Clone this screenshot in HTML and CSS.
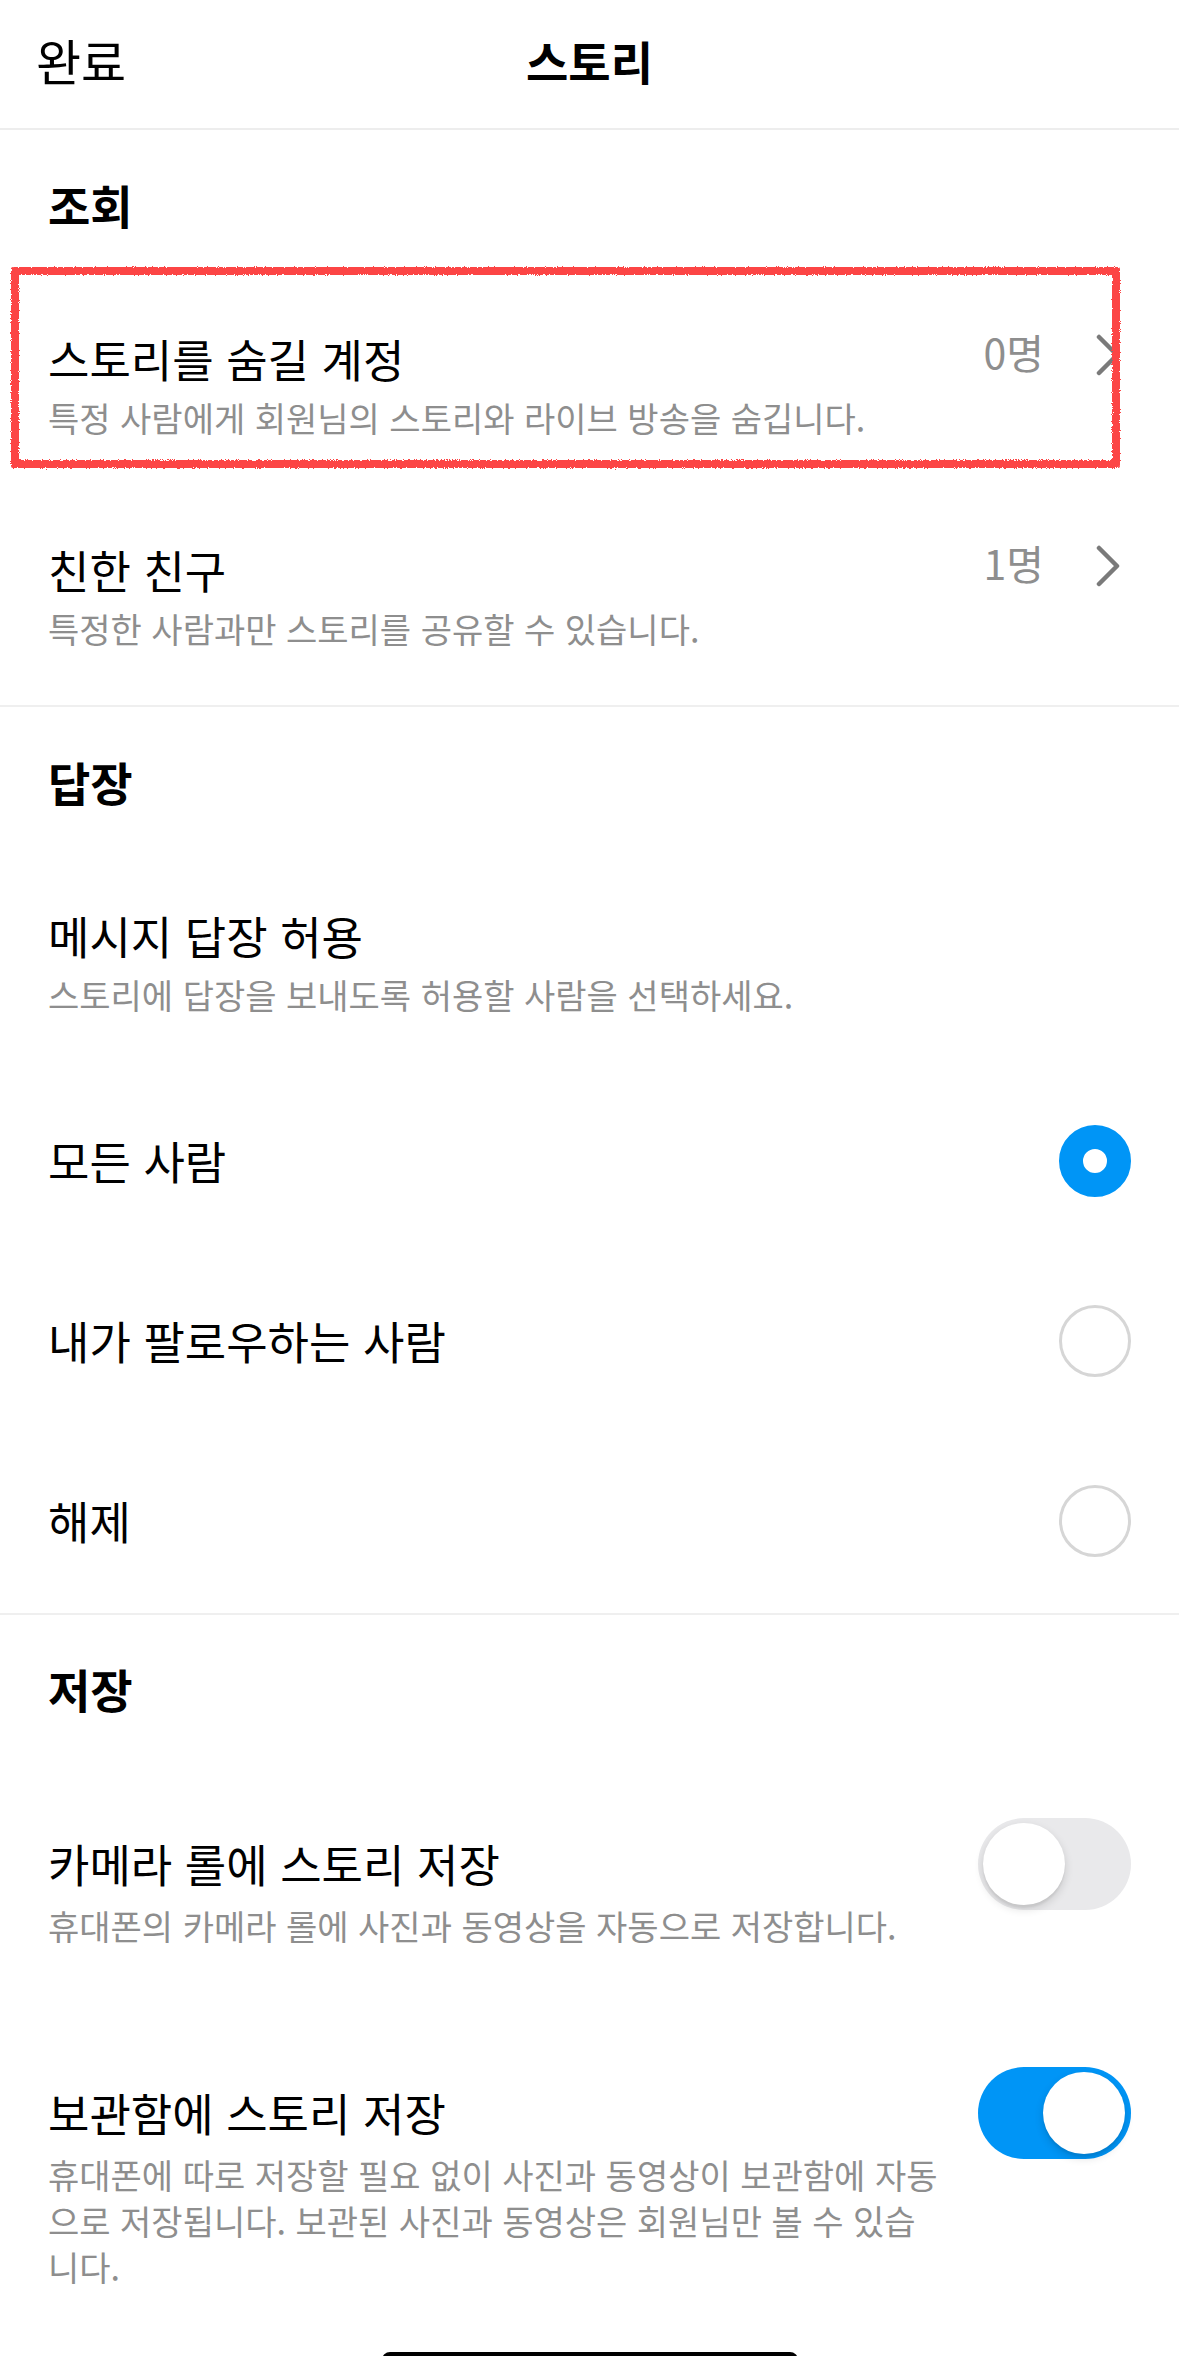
FILE: index.html
```html
<!DOCTYPE html>
<html lang="ko">
<head>
<meta charset="utf-8">
<title>스토리</title>
<link rel="stylesheet" href="styles.css">
</head>
<body>
<svg class="defs" width="0" height="0" aria-hidden="true">
  <filter id="rough" x="-5%" y="-20%" width="110%" height="140%">
    <feTurbulence type="fractalNoise" baseFrequency="0.9" numOctaves="2" seed="3" result="noise"/>
    <feDisplacementMap in="SourceGraphic" in2="noise" scale="4" xChannelSelector="R" yChannelSelector="G"/>
  </filter>
</svg>
<div class="screen">
  <header class="nav">
    <div class="nav-left">완료</div>
    <div class="nav-title">스토리</div>
    <div class="nav-right"></div>
  </header>

  <section class="group">
    <h2 class="group-title">조회</h2>
    <div class="link-row annotated">
      <div class="row-text">
        <div class="row-title">스토리를 숨길 계정</div>
        <div class="row-sub">특정 사람에게 회원님의 스토리와 라이브 방송을 숨깁니다.</div>
      </div>
      <div class="row-value">0명</div>
      <svg class="chev" viewBox="0 0 24 44" width="24" height="44"><polyline points="3,4 21,22 3,40"/></svg>
      <div class="mark"></div>
    </div>
    <div class="link-row">
      <div class="row-text">
        <div class="row-title">친한 친구</div>
        <div class="row-sub">특정한 사람과만 스토리를 공유할 수 있습니다.</div>
      </div>
      <div class="row-value">1명</div>
      <svg class="chev" viewBox="0 0 24 44" width="24" height="44"><polyline points="3,4 21,22 3,40"/></svg>
    </div>
  </section>

  <section class="group">
    <h2 class="group-title">답장</h2>
    <div class="info-row">
      <div class="row-title">메시지 답장 허용</div>
      <div class="row-sub">스토리에 답장을 보내도록 허용할 사람을 선택하세요.</div>
    </div>
    <div class="radio-row">
      <span class="radio-label">모든 사람</span>
      <span class="radio radio-on"></span>
    </div>
    <div class="radio-row">
      <span class="radio-label">내가 팔로우하는 사람</span>
      <span class="radio"></span>
    </div>
    <div class="radio-row">
      <span class="radio-label">해제</span>
      <span class="radio"></span>
    </div>
  </section>

  <section class="group group-last">
    <h2 class="group-title group-title-wide">저장</h2>
    <div class="toggle-row">
      <div class="row-text">
        <div class="row-title">카메라 롤에 스토리 저장</div>
        <div class="row-sub">휴대폰의 카메라 롤에 사진과 동영상을 자동으로 저장합니다.</div>
      </div>
      <span class="toggle"><span class="knob"></span></span>
    </div>
    <div class="toggle-row">
      <div class="row-text">
        <div class="row-title">보관함에 스토리 저장</div>
        <div class="row-sub">휴대폰에 따로 저장할 필요 없이 사진과 동영상이 보관함에 자동으로 저장됩니다. 보관된 사진과 동영상은 회원님만 볼 수 있습니다.</div>
      </div>
      <span class="toggle toggle-on"><span class="knob"></span></span>
    </div>
  </section>

  <div class="home-indicator"></div>
</div>
</body>
</html>
```

FILE: styles.css
```css
* { box-sizing: border-box; }

html, body {
  margin: 0;
  padding: 0;
  background: #ffffff;
}

body {
  width: 1179px;
  height: 2356px;
  overflow: hidden;
  font-family: "Noto Sans CJK KR", "Noto Sans", sans-serif;
  color: #000000;
}

.defs {
  position: absolute;
  width: 0;
  height: 0;
  overflow: hidden;
}

.screen {
  position: relative;
  width: 1179px;
  height: 2356px;
  overflow: hidden;
}

/* Navigation bar */
.nav {
  height: 130px;
  padding: 0 36px 8px 36px;
  border-bottom: 2px solid #ededed;
  display: grid;
  grid-template-columns: 1fr auto 1fr;
  align-items: center;
}

.nav-left {
  font-size: 49px;
  line-height: 60px;
}

.nav-title {
  font-size: 46px;
  line-height: 60px;
  font-weight: 700;
}

/* Groups */
.group {
  padding-bottom: 2px;
  border-bottom: 2px solid #efefef;
}

.group-last {
  border-bottom: none;
}

.group-title {
  margin: 0 0 47px 0;
  padding: 44px 48px 0 48px;
  font-size: 46px;
  line-height: 60px;
  font-weight: 700;
}

.group-title-wide {
  padding-top: 43px;
  margin-bottom: 68px;
}

.row-title {
  font-size: 45px;
  line-height: 52px;
  white-space: nowrap;
}

.row-sub {
  margin-top: 10px;
  font-size: 34px;
  line-height: 46px;
  color: #8e8e8e;
}

/* Link rows (with value and chevron) */
.link-row {
  position: relative;
  display: flex;
  align-items: flex-start;
  padding: 52px 48px 51px 48px;
}

.row-text {
  flex: 1;
  min-width: 0;
}

.row-value {
  margin-top: -4px;
  font-size: 41px;
  line-height: 44px;
  color: #8e8e8e;
}

.chev {
  flex-shrink: 0;
  margin-left: 52px;
  margin-right: 11px;
  fill: none;
  stroke: #7a7a7a;
  stroke-width: 4.5;
  stroke-linecap: round;
  stroke-linejoin: round;
}

/* Red hand-drawn annotation */
.mark {
  position: absolute;
  left: 11px;
  top: -14px;
  right: 59px;
  bottom: 24px;
  border: 8px solid #fc4444;
  border-radius: 2px;
  filter: url(#rough);
  pointer-events: none;
}

/* Info row */
.info-row {
  padding: 52px 48px 53px 48px;
}

/* Radio rows */
.radio-row {
  height: 180px;
  padding: 0 48px;
  display: flex;
  align-items: center;
  justify-content: space-between;
}

.radio-label {
  font-size: 45px;
  line-height: 52px;
}

.radio {
  width: 72px;
  height: 72px;
  border-radius: 50%;
  border: 3px solid #d6d6d6;
  background: #ffffff;
  flex-shrink: 0;
}

.radio-on {
  border: 24px solid #0095f6;
}

/* Toggle rows */
.toggle-row {
  display: flex;
  align-items: flex-start;
  padding: 52px 48px 86px 48px;
}

.toggle-row + .toggle-row {
  padding-bottom: 0;
}

.toggle-row .row-text {
  flex: 0 0 896px;
}

.toggle-row .row-sub {
  margin-top: 13px;
}

.toggle {
  flex-shrink: 0;
  margin: -20px 0 0 auto;
  width: 153px;
  height: 92px;
  border-radius: 46px;
  background: #e9e9eb;
  padding: 5px;
  display: flex;
  justify-content: flex-start;
}

.toggle-on {
  background: #0095f6;
  justify-content: flex-end;
  padding-right: 6px;
}

.knob {
  width: 82px;
  height: 82px;
  border-radius: 50%;
  background: #ffffff;
  box-shadow: 0 4px 10px rgba(0, 0, 0, 0.14), 0 3px 2px rgba(0, 0, 0, 0.05);
}

/* Home indicator */
.home-indicator {
  position: absolute;
  left: 382px;
  top: 2352px;
  width: 416px;
  height: 16px;
  border-radius: 8px;
  background: #000000;
}
```
